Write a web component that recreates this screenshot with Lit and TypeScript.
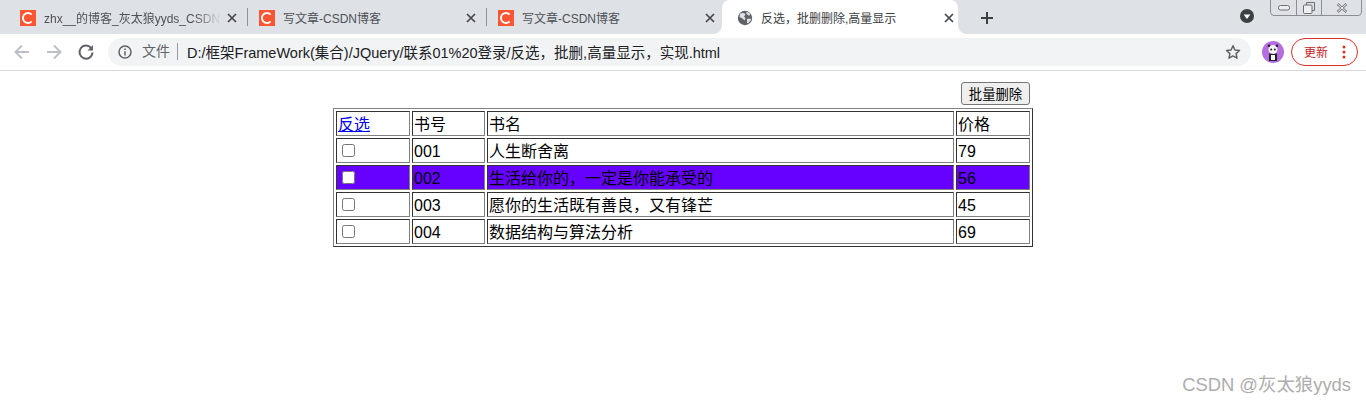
import { LitElement, html, css } from "lit";
import { customElement } from "lit/decorators.js";

const csdnIcon = html`<svg class="fav" viewBox="0 0 16 16" width="16" height="16" aria-hidden="true">
  <rect width="16" height="16" fill="#fc5531"></rect>
  <path d="M11.6 4.6A5 5 0 1 0 11.6 11.4" fill="none" stroke="#fff" stroke-width="1.9"></path>
</svg>`;

const closeIcon = html`<svg class="close" viewBox="0 0 10 10" width="10" height="10" aria-hidden="true">
  <path d="M1 1L9 9M9 1L1 9" stroke="#45474b" stroke-width="1.7" fill="none"></path>
</svg>`;

const globeIcon = html`<svg class="fav" viewBox="0 0 16 16" width="16" height="16" aria-hidden="true">
  <circle cx="8" cy="8" r="7.2" fill="#5f6368"></circle>
  <path d="M3 3.5L7 3l1.5 1.5L7 6.5 8.5 8 7.5 10.5 5.5 8.5 2.5 7ZM9.5 1.8l3 1.2.8 2-2 .5-2-2ZM10 9l3.6-.6.4 1.6-2.6 3.2-1.4-.2Z" fill="#dfe1e5"></path>
</svg>`;

interface Tab { title: string; icon: "csdn" | "globe"; active?: boolean; fade?: boolean }

const tabs: Tab[] = [
  { title: "zhx__的博客_灰太狼yyds_CSDN博客", icon: "csdn", fade: true },
  { title: "写文章-CSDN博客", icon: "csdn" },
  { title: "写文章-CSDN博客", icon: "csdn" },
  { title: "反选，批删删除,高量显示", icon: "globe", active: true },
];

const books = [
  { id: "001", name: "人生断舍离", price: "79", hot: false },
  { id: "002", name: "生活给你的，一定是你能承受的", price: "56", hot: true },
  { id: "003", name: "愿你的生活既有善良，又有锋芒", price: "45", hot: false },
  { id: "004", name: "数据结构与算法分析", price: "69", hot: false },
];

@customElement("app-root")
export class AppRoot extends LitElement {
  static styles = css`
    :host {
      display: block;
      position: relative;
      height: 405px;
      overflow: hidden;
      background: #fff;
      font-family: "Liberation Sans", "Noto Sans CJK SC", sans-serif;
      color: #000;
    }
    .strip {
      display: flex;
      align-items: stretch;
      height: 34px;
      padding-left: 8px;
      background: #dee1e6;
      position: relative;
    }
    .tab {
      width: 239px;
      box-sizing: border-box;
      display: flex;
      align-items: center;
      padding: 1px 10px 0 12px;
      position: relative;
      font-size: 12px;
      color: #4d5156;
      flex: none;
    }
    .tab + .tab::before {
      content: "";
      position: absolute;
      left: 0;
      top: 8px;
      height: 18px;
      width: 1px;
      background: #8f9296;
    }
    .tab.active {
      background: #fff;
      border-radius: 8px 8px 0 0;
      margin-left: -3px;
      padding-left: 15px;
      color: #3c4043;
      width: 236px;
      padding-right: 4px;
    }
    .tab.active::before {
      display: none;
    }
    .tab.active .flare {
      position: absolute;
      bottom: 0;
      width: 8px;
      height: 8px;
    }
    .flare.l {
      left: -8px;
      background: radial-gradient(circle at 0 0, #dee1e6 7.5px, #fff 8px);
    }
    .flare.r {
      right: -8px;
      background: radial-gradient(circle at 100% 0, #dee1e6 7.5px, #fff 8px);
    }
    .fav {
      flex: none;
      margin-right: 8px;
    }
    .title {
      flex: 1;
      min-width: 0;
      white-space: nowrap;
      overflow: hidden;
    }
    .title.fade {
      -webkit-mask-image: linear-gradient(to right, #000 85%, transparent 100%);
      mask-image: linear-gradient(to right, #000 85%, transparent 100%);
    }
    .close {
      flex: none;
      margin: 0 0 0 6px;
    }
    .newtab {
      flex: none;
      align-self: center;
      margin: 2px 0 0 22px;
      display: block;
    }
    .profile-dot {
      position: absolute;
      left: 1240px;
      top: 9px;
    }
    .winctl {
      position: absolute;
      top: -1px;
      left: 1270px;
      width: 92px;
      height: 17px;
      box-sizing: border-box;
      border: 1px solid #8b8e92;
      border-radius: 0 0 4px 4px;
      display: grid;
      grid-template-columns: 25px 25px 1fr;
    }
    .winctl > div {
      display: flex;
      align-items: center;
      justify-content: center;
    }
    .winctl > div + div {
      border-left: 1px solid #8b8e92;
    }
    .toolbar {
      box-sizing: border-box;
      border-bottom: 1px solid #d6d7d9;
      display: flex;
      align-items: center;
      background: #fff;
      height: 37px;
      padding-bottom: 1px;
    }
    .nav {
      flex: none;
      margin-left: 14px;
      display: block;
      width: 18px;
      height: 18px;
    }
    .nav.first {
      margin-left: 13px;
    }
    .omni {
      flex: none;
      margin-left: 13px;
      width: 1143px;
      height: 28px;
      box-sizing: border-box;
      border-radius: 14px;
      background: #f1f3f4;
      display: flex;
      align-items: center;
      padding: 0 10px;
      font-size: 14.5px;
      color: #202124;
    }
    .omni svg {
      flex: none;
    }
    .scheme {
      margin-left: 10px;
      font-size: 14px;
      color: #5f6368;
      padding-right: 7px;
      border-right: 1px solid #9a9da1;
      line-height: 17px;
    }
    .url {
      margin-left: 9px;
      flex: 1;
      white-space: nowrap;
    }
    .avatar {
      flex: none;
      margin-left: 11px;
      display: block;
    }
    .update {
      flex: none;
      margin-left: 7px;
      width: 67px;
      height: 28px;
      box-sizing: border-box;
      border: 1px solid #d93025;
      border-radius: 14px;
      display: flex;
      align-items: center;
      padding-left: 12px;
      color: #c5221f;
      font-size: 12px;
      background: #fff;
    }
    .update svg {
      margin-left: 14px;
      flex: none;
    }
    .page {
      width: 700px;
      margin: 11px auto 0;
      display: flex;
      flex-direction: column;
      align-items: flex-end;
    }
    button {
      height: 23px;
      width: 69px;
      margin: 0 3px 3px 0;
      padding: 0;
      font: 13.33px "Liberation Sans", "Noto Sans CJK SC", sans-serif;
      background: #efefef;
      color: #000;
      border: 1px solid #767676;
      border-radius: 3px;
    }
    table {
      width: 700px;
      table-layout: fixed;
      border-collapse: separate;
      border-spacing: 2px;
      border: 1px solid;
      border-color: #808080 #333 #333 #808080;
      font-size: 16px;
      line-height: 21px;
    }
    th,
    td {
      padding: 2px 1px 0;
      border: 1px solid;
      border-color: #333 #808080 #808080 #333;
      font-weight: normal;
      text-align: left;
      height: 21px;
      white-space: nowrap;
      overflow: hidden;
      vertical-align: top;
    }
    .c1 { width: 74px; }
    .c2 { width: 73px; }
    .c4 { width: 74px; }
    tr.hot td {
      background: #6600ff;
    }
    a {
      color: #0000ee;
    }
    input {
      display: block;
      margin: 3px 3px 3px 4px;
      width: 13px;
      height: 13px;
    }
    .mark {
      position: absolute;
      right: 15px;
      bottom: 7px;
      font-size: 18.4px;
      line-height: 26px;
      color: #adadad;
      white-space: nowrap;
    }
  `;

  private renderTab(t: Tab) {
    return html`<div class="tab ${t.active ? "active" : ""}">
      ${t.active ? html`<span class="flare l"></span><span class="flare r"></span>` : ""}
      ${t.icon === "csdn" ? csdnIcon : globeIcon}
      <span class="title ${t.fade ? "fade" : ""}">${t.title}</span>
      ${closeIcon}
    </div>`;
  }

  render() {
    return html`
      <div class="strip">
        ${tabs.map((t) => this.renderTab(t))}
        <svg class="newtab" viewBox="0 0 14 14" width="14" height="14" aria-hidden="true">
          <path d="M7 1V13M1 7H13" stroke="#3c4043" stroke-width="2" fill="none"></path>
        </svg>
        <svg class="profile-dot" viewBox="0 0 14 14" width="14" height="14" aria-hidden="true">
          <circle cx="7" cy="7" r="7" fill="#3c4043"></circle>
          <path d="M3.6 5.6H10.4L7 10Z" fill="#fff"></path>
        </svg>
        <div class="winctl">
          <div>
            <svg viewBox="0 0 12 6" width="12" height="6" aria-hidden="true">
              <rect x="0.5" y="0.5" width="11" height="4.5" rx="2" fill="#eceef0" stroke="#6b6e72"></rect>
            </svg>
          </div>
          <div>
            <svg viewBox="0 0 12 12" width="12" height="12" aria-hidden="true">
              <path d="M3.5 3V.5H11.5V8.5H9" fill="none" stroke="#6b6e72"></path>
              <rect x="0.5" y="3" width="8.5" height="8.5" rx="1" fill="#eceef0" stroke="#6b6e72"></rect>
            </svg>
          </div>
          <div>
            <svg viewBox="0 0 12 10" width="12" height="10" aria-hidden="true">
              <path d="M1.5 1L10.5 9M10.5 1L1.5 9" stroke="#7a7d81" stroke-width="2.4" fill="none"></path>
              <path d="M1.5 1L10.5 9M10.5 1L1.5 9" stroke="#eceef0" stroke-width="1" fill="none"></path>
            </svg>
          </div>
        </div>
      </div>

      <div class="toolbar">
        <svg class="nav first" viewBox="0 0 18 18" aria-hidden="true">
          <path d="M16 9H3M9 2.5L2.5 9L9 15.5" fill="none" stroke="#bdc1c6" stroke-width="2"></path>
        </svg>
        <svg class="nav" viewBox="0 0 18 18" aria-hidden="true">
          <path d="M2 9H15M9 2.5L15.5 9L9 15.5" fill="none" stroke="#bdc1c6" stroke-width="2"></path>
        </svg>
        <svg class="nav" viewBox="0 0 18 18" aria-hidden="true">
          <path d="M14.2 5.2A6.5 6.5 0 1 0 15.5 9.5" fill="none" stroke="#5f6368" stroke-width="2"></path>
          <path d="M16 2V7.5H10.5Z" fill="#5f6368"></path>
        </svg>
        <div class="omni">
          <svg viewBox="0 0 14 14" width="14" height="14" aria-hidden="true">
            <circle cx="7" cy="7" r="6" fill="none" stroke="#5f6368" stroke-width="1.5"></circle>
            <path d="M7 6.2V10.4M7 3.6V5" stroke="#5f6368" stroke-width="1.5" fill="none"></path>
          </svg>
          <span class="scheme">文件</span>
          <span class="url">D:/框架FrameWork(集合)/JQuery/联系01%20登录/反选，批删,高量显示，实现.html</span>
          <svg viewBox="0 0 16 16" width="16" height="16" aria-hidden="true">
            <path d="M8 1.8L9.9 6l4.6.5-3.4 3.1.9 4.6L8 11.9l-4 2.3.9-4.6L1.500 6.500 6.100 6Z" fill="none" stroke="#5f6368" stroke-width="1.500" stroke-linejoin="round"></path>
          </svg>
        </div>
        <svg class="avatar" viewBox="0 0 22 22" width="22" height="22" aria-hidden="true">
          <circle cx="11" cy="11" r="11" fill="#b56ee0"></circle>
          <path d="M7 20V12.500H15V20Z" fill="#222"></path>
          <circle cx="11" cy="8.500" r="4.500" fill="#f4f4f4"></circle>
          <circle cx="9.200" cy="8.500" r="1" fill="#222"></circle>
          <circle cx="12.800" cy="8.500" r="1" fill="#222"></circle>
          <circle cx="7" cy="4.800" r="1.300" fill="#222"></circle>
          <circle cx="15" cy="4.800" r="1.300" fill="#222"></circle>
          <rect x="9" y="14" width="4" height="5" fill="#f4f4f4"></rect>
        </svg>
        <div class="update">
          <span>更新</span>
          <svg viewBox="0 0 4 14" width="4" height="14" aria-hidden="true">
            <circle cx="2" cy="2" r="1.500" fill="#d93025"></circle>
            <circle cx="2" cy="7" r="1.500" fill="#d93025"></circle>
            <circle cx="2" cy="12" r="1.500" fill="#d93025"></circle>
          </svg>
        </div>
      </div>

      <div class="page">
        <button>批量删除</button>
        <table>
          <colgroup>
            <col class="c1" />
            <col class="c2" />
            <col />
            <col class="c4" />
          </colgroup>
          <thead>
            <tr>
              <th><a href="#">反选</a></th>
              <th>书号</th>
              <th>书名</th>
              <th>价格</th>
            </tr>
          </thead>
          <tbody>
            ${books.map(
              (b) => html`<tr class=${b.hot ? "hot" : ""}>
                <td><input type="checkbox" /></td>
                <td>${b.id}</td>
                <td>${b.name}</td>
                <td>${b.price}</td>
              </tr>`
            )}
          </tbody>
        </table>
      </div>

      <div class="mark">CSDN @灰太狼yyds</div>
    `;
  }
}
